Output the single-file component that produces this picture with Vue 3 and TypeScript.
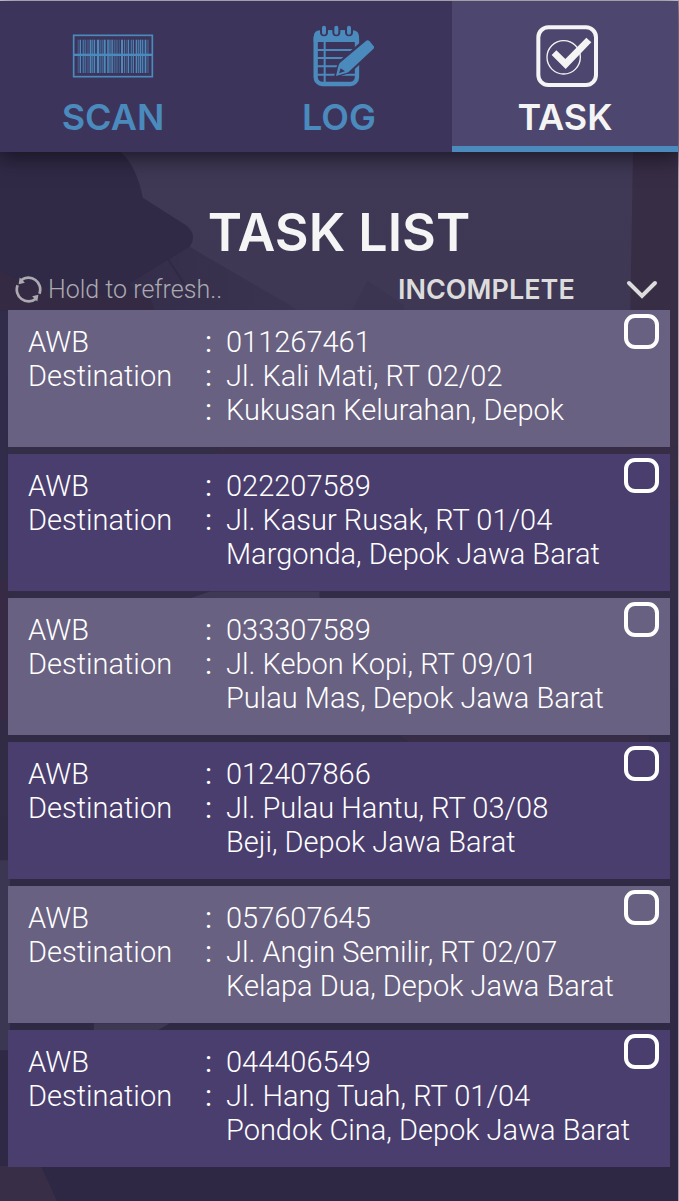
<script setup lang="ts">
import { ref } from 'vue'

interface Line {
  colon: boolean
  text: string
}
interface Task {
  awb: string
  destination: Line[]
  done: boolean
}

const tabs = ['SCAN', 'LOG', 'TASK'] as const
const active = ref<(typeof tabs)[number]>('TASK')
const filter = ref('INCOMPLETE')

function task(awb: string, first: string, second: string, colon = false): Task {
  return {
    awb,
    destination: [
      { colon: true, text: first },
      { colon, text: second },
    ],
    done: false,
  }
}

const tasks = ref<Task[]>([
  task('011267461', 'Jl. Kali Mati, RT 02/02', 'Kukusan Kelurahan, Depok', true),
  task('022207589', 'Jl. Kasur Rusak, RT 01/04', 'Margonda, Depok Jawa Barat'),
  task('033307589', 'Jl. Kebon Kopi, RT 09/01', 'Pulau Mas, Depok Jawa Barat'),
  task('012407866', 'Jl. Pulau Hantu, RT 03/08', 'Beji, Depok Jawa Barat'),
  task('057607645', 'Jl. Angin Semilir, RT 02/07', 'Kelapa Dua, Depok Jawa Barat'),
  task('044406549', 'Jl. Hang Tuah, RT 01/04', 'Pondok Cina, Depok Jawa Barat'),
])

// Barcode stripes: x, width, opacity
const bars: [number, number, number][] = [
  [233, 3, 0.6], [239, 4, 1], [248, 3, 1], [254, 3, 0.9], [260, 7, 0.35],
  [269, 4, 1], [274, 5, 0.7], [281, 4, 1], [287, 2, 0.4], [291, 6, 1],
  [299, 3, 0.8], [305, 3, 0.8], [311, 6, 1], [321, 8, 0.8], [330, 3, 0.5],
  [334, 5, 0.85], [341, 5, 0.5], [347, 8, 0.4], [357, 3, 0.4], [363, 6, 1],
  [372, 3, 0.8], [377, 6, 0.4], [384, 3, 1], [389, 3, 0.3], [393, 4, 0.7],
  [399, 3, 0.9], [407, 4, 1], [413, 4, 0.8], [419, 4, 1], [425, 5, 0.9],
  [434, 5, 1], [441, 6, 0.35],
]
</script>

<template>
  <div class="app">
    <svg class="backdrop" viewBox="0 0 679 1201" preserveAspectRatio="none" aria-hidden="true">
      <defs>
        <linearGradient id="base" x1="0" y1="0" x2="0" y2="1">
          <stop offset="0" stop-color="#403a56" />
          <stop offset=".25" stop-color="#3e3855" />
          <stop offset=".38" stop-color="#332d47" />
          <stop offset="1" stop-color="#2e2844" />
        </linearGradient>
        <linearGradient id="fold" x1="0" y1="0" x2="1" y2="0">
          <stop offset="0" stop-color="#352e4a" />
          <stop offset="1" stop-color="#3a3451" />
        </linearGradient>
      </defs>
      <rect width="679" height="1201" fill="url(#base)" />
      <path d="M130 283L190 246L300 310H148Z" fill="url(#fold)" />
      <path d="M0 150H120Q137 165 143 197L187 225Q198 235 190 246L130 283L150 310H0Z" fill="#302a47" />
      <path d="M168 258L185 284" stroke="#302a47" stroke-width="2" />
      <path d="M0 270Q50 298 150 295L155 310H0Z" fill="#352a44" />
      <path d="M352 310L368 280L405 305V310Z" fill="#3b3552" />
      <path d="M634 150H679V500H628Z" fill="#372d45" />
      <path d="M0 310H8V560H0Z" fill="#302c4a" />
      <path d="M0 580H10V720H0Z" fill="#362a44" />
      <path d="M220 447H679V454H215Z" fill="#382d46" />
      <path d="M190 598L210 591H320V598Z" fill="#403955" />
      <path d="M400 735H650V742H410Z" fill="#382d46" />
      <path d="M0 860H10V1050H0Z" fill="#3b3652" />
      <path d="M94 1023H170L158 1030H94Z" fill="#3e3853" />
      <path d="M0 1166H41L57 1201H0Z" fill="#392e47" />
    </svg>

    <nav class="tabs" aria-label="Main">
      <button
        v-for="tab in tabs"
        :key="tab"
        type="button"
        class="tab"
        :class="{ active: tab === active }"
        :aria-pressed="tab === active"
        @click="active = tab"
      >
        <svg class="tab-icon" viewBox="216 69 246 195" aria-hidden="true">
          <g v-if="tab === 'SCAN'" fill="currentColor">
            <rect x="221" y="106" width="236" height="124" fill="none" stroke="currentColor" stroke-width="5" />
            <rect
              v-for="(bar, i) in bars"
              :key="i"
              :x="bar[0]"
              y="119"
              :width="bar[1]"
              height="100"
              :opacity="bar[2]"
            />
            <rect x="221" y="161" width="236" height="7" />
          </g>
          <g v-else-if="tab === 'LOG'">
            <rect x="269" y="97" width="124" height="155" rx="20" fill="none" stroke="currentColor" stroke-width="13" />
            <path d="M263 126V112Q263 91 282 91H380Q399 91 399 112V126Z" fill="currentColor" />
            <path d="M296 124V250M270 150H392M270 174H392M270 199H392M270 224H392" fill="none" stroke="currentColor" stroke-width="6" />
            <path class="cut-line" d="M294 84V97M331 84V97M369 84V97" fill="none" stroke-width="24" stroke-linecap="round" />
            <path d="M294 83V98M331 83V98M369 83V98" fill="none" stroke="currentColor" stroke-width="12" stroke-linecap="round" />
            <path class="cut" d="M323 235L336 185L415 116Q425 107 435 116L452 133Q456 143 448 151L374 218Z" />
            <path d="M330 228L337 198Q339 191 344 187L419 124Q425 118 431 124L442 137Q447 142 441 148L371 213Q367 217 361 219Z" fill="currentColor" />
            <path class="cut" d="M339 220L344 205L357 214Z" />
          </g>
          <g v-else>
            <rect x="259" y="82" width="173" height="173" rx="30" fill="none" stroke="currentColor" stroke-width="12" />
            <circle cx="335" cy="172" r="50" fill="none" stroke="currentColor" stroke-width="4" />
            <path d="M299 165L313 151L340 177L403 113L418 127L341 207Z" fill="currentColor" />
          </g>
        </svg>
        <span>{{ tab }}</span>
      </button>
    </nav>

    <main class="content">
      <h1 class="title">TASK LIST</h1>

      <div class="toolbar">
        <button type="button" class="refresh">
          <svg class="refresh-icon" viewBox="0 0 26 26" aria-hidden="true">
            <g fill="none" stroke="currentColor" stroke-width="2.600">
              <path d="M6 4A11.300 11.300 0 0 1 23.500 17" />
              <path d="M20 22A11.300 11.300 0 0 1 2.500 9" />
            </g>
            <path d="M4.500 1.500L3.500 8L9.500 6.500ZM21.500 24.500L22.500 18L16.500 19.500Z" fill="currentColor" />
          </svg>
          <span>Hold to refresh..</span>
        </button>
        <div class="filter">
          <select v-model="filter" aria-label="Task status">
            <option>INCOMPLETE</option>
            <option>COMPLETE</option>
          </select>
          <svg class="chevron" viewBox="0 0 32 20" aria-hidden="true">
            <path d="M3 3L16 16L29 3" fill="none" stroke="currentColor" stroke-width="4" stroke-linecap="round" />
          </svg>
        </div>
      </div>

      <ul class="list">
        <li v-for="item in tasks" :key="item.awb" class="card">
          <dl class="details">
            <dt>AWB</dt>
            <dd><span class="colon">:</span>{{ item.awb }}</dd>
            <dt>Destination</dt>
            <dd v-for="line in item.destination" :key="line.text">
              <span class="colon">{{ line.colon ? ':' : '' }}</span>{{ line.text }}
            </dd>
          </dl>
          <input v-model="item.done" type="checkbox" class="check" :aria-label="'Complete ' + item.awb" />
        </li>
      </ul>
    </main>
  </div>
</template>

<style>
body {
  margin: 0;
  background: #2e2844;
}
</style>

<style scoped>
* {
  box-sizing: border-box;
}
.app {
  position: relative;
  min-height: 100vh;
  border-top: 1px solid #dfe1e6;
  border-right: 1px solid #a7a0aa;
  color: #fff;
  font-family: Roboto, "Liberation Sans", sans-serif;
  font-weight: 300;
  isolation: isolate;
}
.backdrop {
  position: absolute;
  inset: 0;
  z-index: -1;
  width: 100%;
  height: 100%;
}
button,
select {
  border: 0;
  padding: 0;
  margin: 0;
  background: none;
  color: inherit;
  font: inherit;
}
.tabs {
  display: grid;
  grid-template-columns: repeat(3, 1fr);
  background: #3d345c;
  box-shadow: 0 4px 20px 2px rgba(18, 14, 24, 0.75);
}
.tab {
  --surface: #3d345c;
  display: flex;
  flex-direction: column;
  align-items: center;
  gap: 4px;
  padding: 22px 0 4px;
  border-bottom: 6px solid transparent;
  background: var(--surface);
  color: #4a8abc;
  font: 600 36px/50px Inter, sans-serif;
}
.tab.active {
  --surface: #4d466e;
  border-bottom-color: #4a8abc;
  color: #f4f4f4;
}
.tab-icon {
  width: 82px;
  height: 65px;
}
.cut {
  fill: var(--surface);
}
.cut-line {
  stroke: var(--surface);
}
.content {
  padding: 49px 8px 34px;
}
.title {
  margin: 0;
  text-align: center;
  color: #f5f5f5;
  font: 600 52px/64px Inter, sans-serif;
}
.toolbar {
  display: flex;
  justify-content: space-between;
  height: 45px;
  padding: 4px 12px 0 7px;
}
.refresh {
  display: flex;
  align-items: center;
  gap: 6px;
  color: #acaab0;
  font-size: 25px;
}
.refresh-icon {
  width: 27px;
  height: 27px;
}
.filter {
  display: grid;
  align-items: center;
  color: #dcdcdc;
}
.filter > * {
  grid-area: 1 / 1;
}
.filter select {
  width: 260px;
  appearance: none;
  font: 600 27px/36px Inter, sans-serif;
}
.filter option {
  color: #222;
}
.chevron {
  justify-self: end;
  width: 32px;
  height: 20px;
  pointer-events: none;
}
.list {
  display: grid;
  gap: 7px;
  margin: 0;
  padding: 0;
  list-style: none;
}
.card {
  position: relative;
  padding: 15px 20px 20px;
  background: #4a3e6e;
}
.card:nth-child(odd) {
  background: #696181;
}
.details {
  display: grid;
  grid-template-columns: 177px 1fr;
  margin: 0;
  font-size: 29px;
  line-height: 34px;
}
.details dt {
  grid-column: 1;
}
.details dd {
  grid-column: 2;
  display: flex;
  margin: 0;
}
.colon {
  flex: 0 0 21px;
  font-weight: 400;
}
.check {
  position: absolute;
  top: 4px;
  right: 11px;
  width: 35px;
  height: 35px;
  margin: 0;
  border: 4px solid #fff;
  border-radius: 11px;
  appearance: none;
}
.check:checked {
  background: #4a8abc;
}
</style>
